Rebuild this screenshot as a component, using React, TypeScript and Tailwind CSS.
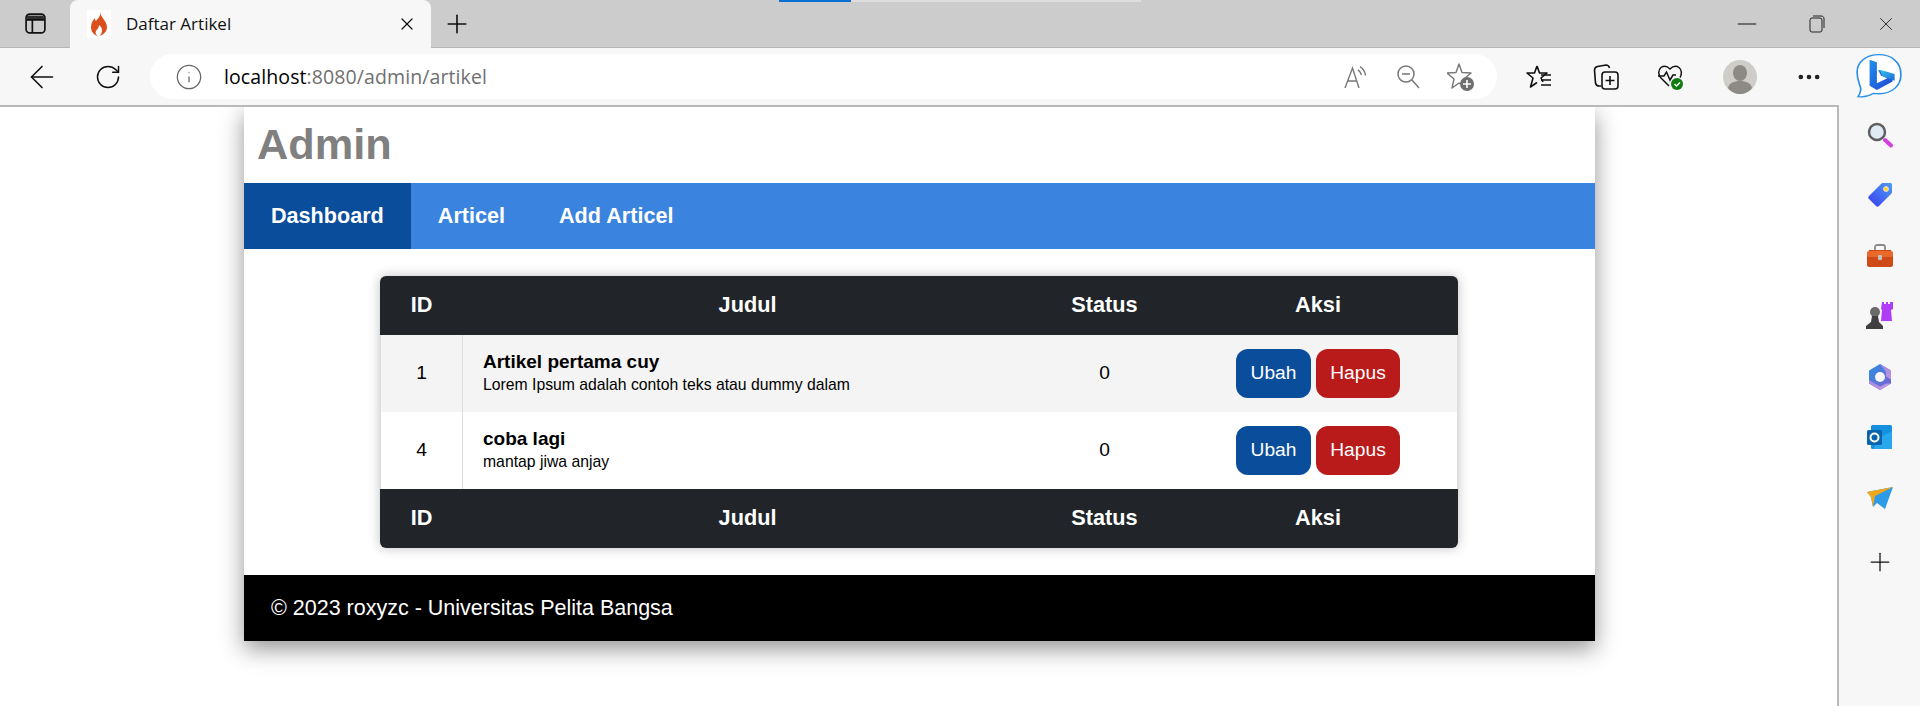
import { Info, MoreHorizontal, Plus, RotateCw, ArrowLeft, X, Minus } from "lucide-react";

const rows = [
  { id: 1, title: "Artikel pertama cuy", desc: "Lorem Ipsum adalah contoh teks atau dummy dalam", status: 0, bg: "bg-[#f4f4f4]" },
  { id: 4, title: "coba lagi", desc: "mantap jiwa anjay", status: 0, bg: "bg-white" },
];

const TabsIcon = () => (
  <svg width="23" height="23" viewBox="0 0 22 22" fill="none" stroke="#111" strokeWidth="1.6">
    <rect x="2" y="2" width="18" height="18" rx="3.5" />
    <path d="M2.5 7.5h17M8 7.5V19.5" />
    <path d="M3 3.5h16v4H3z" fill="#111" stroke="none" opacity="0.85" />
  </svg>
);

const Flame = () => (
  <svg width="24" height="28" viewBox="0 0 24 28">
    <rect width="24" height="28" fill="#fff" />
    <path d="M13 2c1 4-2 6-4 9-1-1-1-2-1-3-2 2-4 5-4 9 0 5 3 8 7 9-2-1-3-3-2-5 1-2 3-3 3-6 2 2 3 3 3 5 0 3-1 5-3 6 4-1 8-4 8-9 0-6-6-9-7-15z" fill="#d9501e" />
  </svg>
);

const ReadAloud = () => (
  <svg width="26" height="26" viewBox="0 0 26 26" fill="none" stroke="#777" strokeWidth="1.4">
    <path d="M2 24 9.5 4 16 24M5 17h9" />
    <path d="M15 6c2 1 3 3 3.500 5M17 2.500c3 2 5 5 5.500 9" />
  </svg>
);

const ZoomOut = () => (
  <svg width="24" height="26" viewBox="0 0 24 26" fill="none" stroke="#777" strokeWidth="1.5">
    <circle cx="10" cy="10" r="8" />
    <path d="M6 10h8M16 16l7 8" />
  </svg>
);

const StarAdd = () => (
  <svg width="28" height="30" viewBox="0 0 28 30" fill="none">
    <path d="M12 2l3 8.500 9 .5-7 6 2.500 9-7.500-5-7 5 2-9-7-6 9-.5z" stroke="#777" strokeWidth="1.4" strokeLinejoin="round" />
    <circle cx="20" cy="22" r="7" fill="#6f6f6f" />
    <path d="M20 18v8M16 22h8" stroke="#fff" strokeWidth="1.6" />
  </svg>
);

const Favorites = () => (
  <svg width="26" height="26" viewBox="0 0 26 26" fill="none" stroke="#111" strokeWidth="1.6" strokeLinejoin="round">
    <path d="M11 2l2.500 7H21l-6 5 2 4M11 2 8.500 9H1l6 5-2.500 9 6.500-4.500" />
    <path d="M15 11h10M15 16h10M15 21h10" />
  </svg>
);

const Collections = () => (
  <svg width="26" height="28" viewBox="0 0 26 28" fill="none" stroke="#111" strokeWidth="1.6">
    <path d="M8 23H6c-2 0-3-1-3.500-3L1.500 7c0-2 1-3 3-3.500L13 2c2 0 3 1 3.500 3" />
    <rect x="9" y="9" width="16" height="17" rx="3" />
    <path d="M17 13v9M12.500 17.500h9" />
  </svg>
);

const Health = () => (
  <svg width="28" height="28" viewBox="0 0 28 28" fill="none">
    <path d="M12 23 4 15C1 12 1 7 4 4.500c3-2 6-1.500 9 1.500 3-3 6-3.500 9-1.500 3 2.500 3 7 1 10" stroke="#111" strokeWidth="1.5" />
    <path d="M1 13h6l2.500-4 3.500 8 3-5h3" stroke="#111" strokeWidth="1.5" fill="none" />
    <circle cx="20" cy="21" r="6" fill="#107c10" />
    <path d="M17.500 21l2 2 3.500-3.500" stroke="#fff" strokeWidth="1.4" />
  </svg>
);

const Avatar = () => (
  <svg width="34" height="34" viewBox="0 0 34 34">
    <circle cx="17" cy="17" r="17" fill="#cfcdc9" />
    <ellipse cx="17" cy="13" rx="7" ry="8" fill="#8d8a86" />
    <path d="M5 28c1-5 6-7 12-7s11 2 12 7c-3 4-8 6-12 6s-9-2-12-6z" fill="#8d8a86" />
  </svg>
);

const Bing = () => (
  <svg width="48" height="47" viewBox="0 0 46 56" preserveAspectRatio="none" fill="none">
    <defs>
      <linearGradient id="bingB" x1="0" y1="0" x2="1" y2="1">
        <stop offset="0" stopColor="#1f8fe8" />
        <stop offset="1" stopColor="#2146d8" />
      </linearGradient>
      <linearGradient id="bingC" x1="0" y1="0" x2="1" y2="1">
        <stop offset="0" stopColor="#37c9e8" />
        <stop offset="1" stopColor="#2068dc" />
      </linearGradient>
    </defs>
    <path d="M23 2C10 2 2 11 2 23c0 8 2 13 3 17 1 3 0 8-2 12 6 1 11-1 15-4 2 .5 3 .5 5 .5 13 0 21-10 21-23C44 11 35 2 23 2z" fill="#fff" stroke="#2b8fe8" strokeWidth="1.600" />
    <path d="M14 8l7 3v25l10-6-6-3-3-7 14 5v9L21 44l-7-5z" fill="url(#bingB)" />
    <path d="M24 20l14 5v8l-7-3-5-3z" fill="url(#bingC)" />
  </svg>
);

const sidebarIcons = [
  <svg key="search" width="26" height="26" viewBox="0 0 26 26" fill="none">
    <circle cx="10" cy="10" r="8" fill="#dfeaf5" stroke="#5f5f5f" strokeWidth="2.500" />
    <path d="M18 18l6 5.500" stroke="#d53fe0" strokeWidth="4" strokeLinecap="round" />
  </svg>,
  <svg key="tag" width="26" height="26" viewBox="0 0 26 26">
    <defs>
      <linearGradient id="tagG" x1="1" y1="0" x2="0" y2="1">
        <stop offset="0" stopColor="#4f9cf5" />
        <stop offset="1" stopColor="#3a3cf0" />
      </linearGradient>
    </defs>
    <path d="M16 1h7c1.500 0 2 .5 2 2v7c0 1-.5 1.500-1 2L12 24c-1 1-2 1-3 0l-7-7c-1-1-1-2 0-3L14 2c.5-.5 1-1 2-1z" fill="url(#tagG)" />
    <circle cx="19" cy="7" r="2.500" fill="#ffd23f" stroke="#fff" strokeWidth="0.600" />
  </svg>,
  <svg key="tools" width="28" height="24" viewBox="0 0 28 24">
    <path d="M9 6V3c0-1 1-2 2-2h6c1 0 2 1 2 2v3" fill="none" stroke="#8a8a8a" strokeWidth="1.800" />
    <path d="M3 6h22l2 5v10c0 1-1 2-2 2H3c-1 0-2-1-2-2V11z" fill="#cf4a18" />
    <rect x="1" y="7" width="26" height="6" rx="2" fill="#e86a2a" />
    <rect x="12" y="11" width="4" height="5" rx="1" fill="#c4c4c4" />
  </svg>,
  <svg key="games" width="28" height="28" viewBox="0 0 28 28">
    <path d="M16 0h2v2h2V0h2v2h2V0h3v7l-2 1 1 11H15l1-11-1-1z" fill="#b13cf5" />
    <circle cx="9" cy="10" r="5" fill="#6a6a6a" />
    <path d="M6 14h6l1 6 4 4v3H0v-3l5-4z" fill="#3f3f3f" />
  </svg>,
  <svg key="office" width="26" height="28" viewBox="0 0 26 28">
    <defs>
      <linearGradient id="off1" x1="0" y1="0" x2="1" y2="1">
        <stop offset="0" stopColor="#2c8fe0" />
        <stop offset="1" stopColor="#7a5fd0" />
      </linearGradient>
      <linearGradient id="off2" x1="0" y1="0" x2="1" y2="1">
        <stop offset="0" stopColor="#9a7fe0" />
        <stop offset="1" stopColor="#c59ae0" />
      </linearGradient>
    </defs>
    <path d="M13 1l11 6.500v13L13 27 2 20.500v-13z" fill="url(#off1)" />
    <path d="M13 1l11 6.500v9l-5-3V9zM2 17l5 3 6 3.500 6-3 5 0-11 6.500L2 20.500z" fill="url(#off2)" />
    <circle cx="13" cy="14" r="5" fill="#f7f7f7" />
  </svg>,
  <svg key="outlook" width="26" height="26" viewBox="0 0 26 26">
    <rect x="4" y="1" width="21" height="24" rx="1.500" fill="#1490df" />
    <path d="M14 13l11-6v18H6z" fill="#28a8ea" />
    <rect x="0" y="6" width="15" height="15" rx="1.500" fill="#0a64ad" />
    <circle cx="7.500" cy="13.500" r="4" fill="none" stroke="#fff" strokeWidth="2" />
  </svg>,
  <svg key="send" width="28" height="24" viewBox="0 0 28 24">
    <path d="M1 6 27 1 19 23l-8-6-4 4-2-10z" fill="#2e9be8" />
    <path d="M1 6 27 1 9 10l-2 11-2-10z" fill="#f0a818" />
  </svg>,
];

const HeadRow = () => (
  <tr className="h-[59px] bg-[#212529] text-white text-[21.700px]">
    <th className="w-[83px] font-bold">ID</th>
    <th className="w-[569px] font-bold">Judul</th>
    <th className="w-[145px] font-bold">Status</th>
    <th className="font-bold pl-[1px]">Aksi</th>
  </tr>
);

export default function App() {
  return (
    <div className="w-[1920px] h-[706px] overflow-hidden flex flex-col bg-white font-['Liberation_Sans',Arial,sans-serif]">
      {/* Browser title bar */}
      <div className="relative h-[48px] shrink-0 bg-[#cccccc] flex items-end font-['Open_Sans',sans-serif] border-b border-[#b5b5b5]">
        <div className="w-[70px] h-full flex items-center justify-center">
          <TabsIcon />
        </div>
        <div className="w-[361px] h-[48px] -mb-px bg-[#f7f7f7] rounded-t-lg flex items-center pl-[17px] pr-[14px]">
          <Flame />
          <span className="ml-[15px] text-[17px] text-[#111] flex-1">Daftar Artikel</span>
          <X size={20} strokeWidth={1.5} color="#111" />
        </div>
        <div className="w-[52px] h-full flex items-center justify-center">
          <Plus size={30} strokeWidth={1.3} color="#111" />
        </div>
        <div className="absolute left-[779px] top-0 w-[362px] h-[2px] bg-[#dedede]">
          <div className="w-[72px] h-full bg-[#0a6fd0]" />
        </div>
        <div className="ml-auto h-full flex items-center">
          <div className="w-[68px] flex justify-center">
            <Minus size={30} strokeWidth={0.8} color="#111" />
          </div>
          <div className="w-[71px] flex justify-center">
            <svg width="16" height="18" viewBox="0 0 16 18" fill="none" stroke="#222" strokeWidth="1">
              <rect x="1" y="3" width="12" height="14" rx="2" />
              <path d="M4 1h8c2 0 3 1 3 3v9" />
            </svg>
          </div>
          <div className="w-[68px] flex justify-center">
            <X size={22} strokeWidth={0.9} color="#111" />
          </div>
        </div>
      </div>

      {/* Browser toolbar */}
      <div className="h-[57px] shrink-0 bg-[#f7f7f7] flex items-center font-['Open_Sans',sans-serif]">
        <div className="w-[84px] flex justify-center">
          <ArrowLeft size={36} strokeWidth={1.1} color="#111" />
        </div>
        <div className="w-[48px] flex justify-center">
          <RotateCw size={28} strokeWidth={1.3} color="#111" />
        </div>
        <div className="ml-[18px] w-[1347px] h-[45px] bg-white rounded-full flex items-center pl-[25px] pr-[22px]">
          <Info size={28} strokeWidth={1.1} color="#666" />
          <span className="ml-[21px] text-[19.500px] tracking-[0.1px] flex-1">
            <span className="text-black">localhost</span>
            <span className="text-[#6f6f6f]">:8080/admin/artikel</span>
          </span>
          <div className="flex items-center gap-[27px]">
            <ReadAloud />
            <ZoomOut />
            <StarAdd />
          </div>
        </div>
        <div className="ml-[28px] w-[28px] flex justify-center">
          <Favorites />
        </div>
        <div className="ml-[39px] w-[28px] flex justify-center">
          <Collections />
        </div>
        <div className="ml-[37px] w-[28px] flex justify-center">
          <Health />
        </div>
        <div className="ml-[38px] w-[34px] flex justify-center">
          <Avatar />
        </div>
        <div className="ml-[38px] w-[28px] flex justify-center">
          <MoreHorizontal size={28} strokeWidth={2} color="#222" />
        </div>
        <div className="ml-[32px] w-[48px] flex justify-center">
          <Bing />
        </div>
      </div>

      {/* Page + edge sidebar */}
      <div className="flex-1 flex min-h-0">
        <div className="w-[1839px] border-t-2 border-r-2 border-[#b9b9b9] bg-white pl-[244px] overflow-hidden">
          <div className="w-[1351px] bg-white shadow-[0_8px_22px_rgba(0,0,0,0.42)]">
            <header className="h-[76px] pl-[13px] flex items-center">
              <h1 className="text-[43.300px] font-bold text-[#808080] leading-none">Admin</h1>
            </header>
            <nav className="h-[66px] bg-[#3a84e0] flex text-white text-[21.600px] font-bold">
              <a className="px-[27px] flex items-center bg-[#0a4d9b]">Dashboard</a>
              <a className="px-[27px] flex items-center">Articel</a>
              <a className="px-[27px] flex items-center">Add Articel</a>
            </nav>
            <section className="pt-[27px] pb-[27px] pl-[136px]">
              <div className="w-[1078px] rounded-md overflow-hidden shadow-[0_0_12px_rgba(0,0,0,0.25)]">
                <table className="w-full border-separate border-spacing-0 table-fixed text-[19.200px] text-black">
                  <thead>
                    <HeadRow />
                  </thead>
                  <tbody>
                    {rows.map((r) => (
                      <tr key={r.id} className={`h-[77px] ${r.bg}`}>
                        <td className="text-center border-x border-[#dddddd]">{r.id}</td>
                        <td className="pl-[20px] pt-[1px]">
                          <div className="text-[19px] font-bold leading-[22px]">{r.title}</div>
                          <div className="text-[15.750px] leading-[24px]">{r.desc}</div>
                        </td>
                        <td className="text-center">{r.status}</td>
                        <td className="border-r border-[#dddddd]">
                          <div className="flex justify-center gap-[5px] pl-[2px]">
                            <button className="w-[75px] h-[49px] rounded-[12px] bg-[#0a4d9b] text-white">Ubah</button>
                            <button className="w-[84px] h-[49px] rounded-[12px] bg-[#b91b1b] text-white">Hapus</button>
                          </div>
                        </td>
                      </tr>
                    ))}
                  </tbody>
                  <tfoot>
                    <HeadRow />
                  </tfoot>
                </table>
              </div>
            </section>
            <footer className="h-[66px] bg-black text-white text-[21.500px] pl-[27px] flex items-center">
              © 2023 roxyzc - Universitas Pelita Bangsa
            </footer>
          </div>
        </div>
        <aside className="flex-1 bg-[#f7f7f7] flex flex-col items-center pt-[17px] gap-[33.500px] -mt-px">
          {sidebarIcons.map((icon, i) => (
            <div key={i} className="h-[27px] flex items-center justify-center">
              {icon}
            </div>
          ))}
          <div className="mt-[2px]">
            <Plus size={30} strokeWidth={1} color="#111" />
          </div>
        </aside>
      </div>
    </div>
  );
}
